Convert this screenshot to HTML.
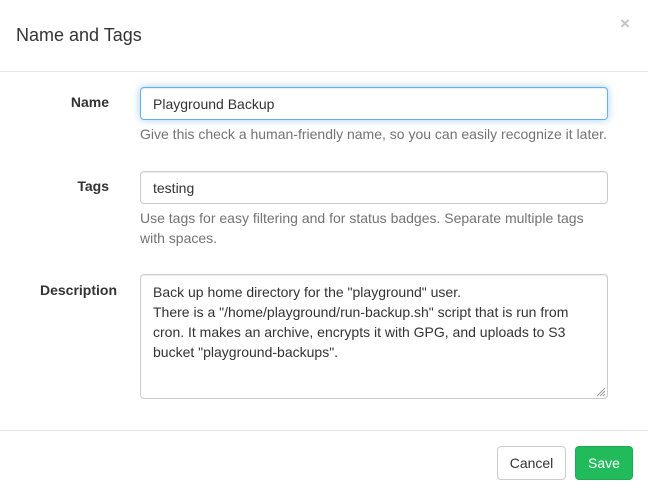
<!DOCTYPE html>
<html><head><style>
body{margin:0;width:648px;height:495px;background:#fff;font-family:"Liberation Sans",sans-serif;font-size:14px;color:#333;position:relative;overflow:hidden}
.a{position:absolute}
.lbl{font-weight:bold;text-align:right;width:120px}
.inp{border:1px solid #ccc;border-radius:4px;box-sizing:border-box;padding:6px 12px;line-height:20px;box-shadow:inset 0 1px 1px rgba(0,0,0,.075)}
.help{color:#737373;line-height:20px}
.btn{border-radius:4px;box-sizing:border-box;text-align:center;line-height:20px;padding:6px 0}
</style></head><body>
<div class="a" style="left:16px;top:24px;font-size:18px;line-height:22px">Name and Tags</div>
<div class="a" style="left:620px;top:14px;font-size:17px;font-weight:bold;color:#c4c4c4">×</div>
<div class="a" style="left:0;top:71px;width:648px;border-top:1px solid #e5e5e5"></div>

<div class="a lbl" style="left:-11px;top:94px">Name</div>
<div class="a inp" style="left:140px;top:87px;width:468px;height:33px;border-color:#66afe9;box-shadow:inset 0 1px 1px rgba(0,0,0,.075),0 0 8px rgba(102,175,233,.6)">Playground Backup</div>
<div class="a help" style="left:140px;top:124px">Give this check a human-friendly name, so you can easily recognize it later.</div>

<div class="a lbl" style="left:-11px;top:178px">Tags</div>
<div class="a inp" style="left:140px;top:171px;width:468px;height:33px">testing</div>
<div class="a help" style="left:140px;top:208px;width:470px">Use tags for easy filtering and for status badges. Separate multiple tags with spaces.</div>

<div class="a lbl" style="left:-3px;top:282px">Description</div>
<div class="a inp" style="left:140px;top:274px;width:468px;height:125px;padding-top:7px">Back up home directory for the "playground" user.<br>There is a "/home/playground/run-backup.sh" script that is run from cron. It makes an archive, encrypts it with GPG, and uploads to S3 bucket "playground-backups".</div>
<svg class="a" style="left:596px;top:387px" width="10" height="10"><path d="M9 1L1 9M9 4L4 9M9 7L7 9" stroke="#999" stroke-width="1"/></svg>

<div class="a" style="left:0;top:430px;width:648px;border-top:1px solid #e5e5e5"></div>
<div class="a btn" style="left:497px;top:446px;width:69px;height:34px;border:1px solid #ccc;background:#fff">Cancel</div>
<div class="a btn" style="left:575px;top:446px;width:58px;height:34px;border:1px solid #1fa952;background:#22bb5b;color:#fff">Save</div>
</body></html>
